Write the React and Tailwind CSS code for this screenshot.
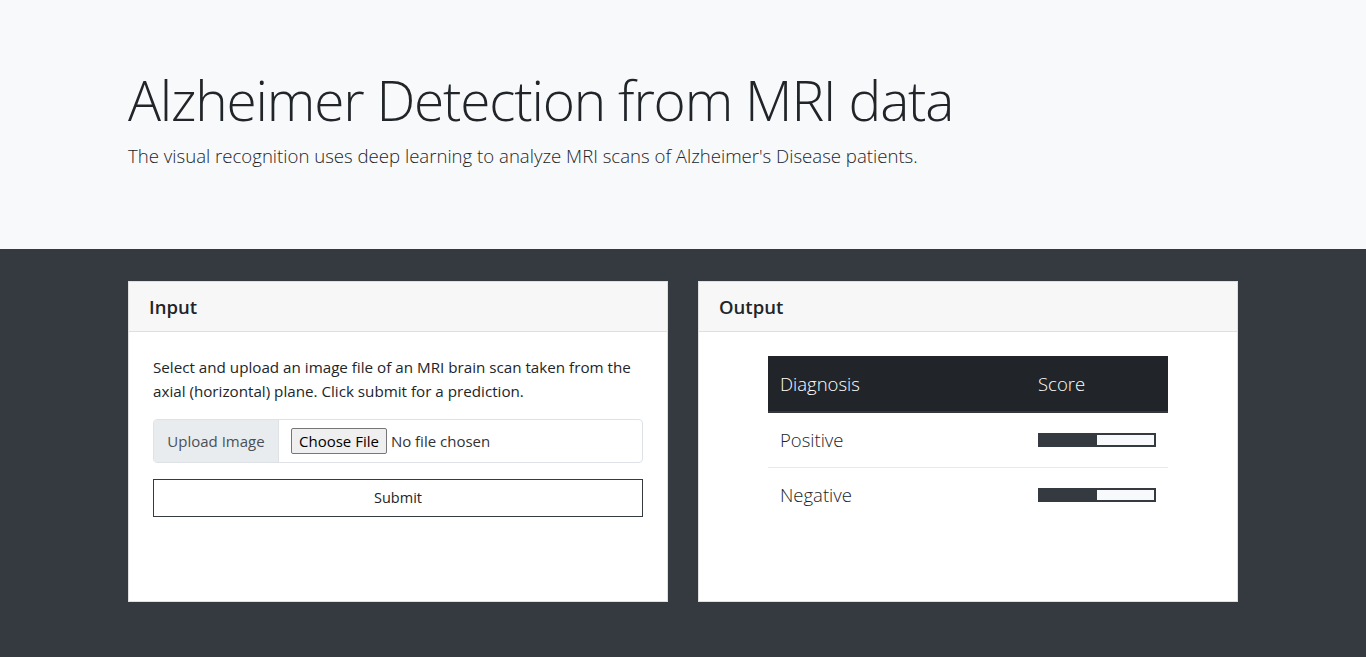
import React from 'react';

function ScoreBar({ value }) {
    return (
        <div className="h-[14px] w-[118px] border-2 border-[#343a40] bg-[#f8f9fa]">
            <div className="h-full bg-[#343a40]" style={{ width: `${value}%` }} />
        </div>
    );
}

export default function App() {
    const rows = [
        { label: 'Positive', score: 50 },
        { label: 'Negative', score: 50 },
    ];

    return (
        <div className="min-h-[657px] bg-[#343a40] font-['Open_Sans',sans-serif] text-[#212529]">
            {/* Jumbotron */}
            <div className="h-[249px] bg-[#f8f9fa]">
                <div className="mx-auto w-[1140px] px-[15px] pt-[67px]">
                    <h1 className="text-[55px] font-light leading-[1.2] tracking-[-1.2px] text-[#212529]">
                        Alzheimer Detection from MRI data
                    </h1>
                    <p className="mt-[9px] text-[18.6px] font-light leading-[1.5] text-[#212529]">
                        The visual recognition uses deep learning to analyze MRI scans of Alzheimer's Disease patients.
                    </p>
                </div>
            </div>

            {/* Cards */}
            <div className="mx-auto grid w-[1140px] grid-cols-2 gap-[30px] px-[15px] pt-[32px]">
                <div className="flex h-[321px] flex-col border border-[#dfdfdf] bg-white">
                    <div className="flex h-[50px] items-center border-b border-[#dfdfdf] bg-[#f7f7f7] px-[20px]">
                        <h5 className="text-[18.5px] font-semibold text-[#212529]">Input</h5>
                    </div>
                    <div className="px-[24px] pt-[23px]">
                        <p className="text-[15.2px] leading-[24px] text-[#212529]">
                            Select and upload an image file of an MRI brain scan taken from the axial (horizontal) plane. Click submit for a prediction.
                        </p>
                        <div className="mt-[16px] flex h-[44px] rounded-[4px] border border-[#dee2e6]">
                            <div className="flex w-[125px] items-center justify-center border-r border-[#dee2e6] bg-[#e9ecef] text-[15px] text-[#495057]">
                                Upload Image
                            </div>
                            <div className="flex items-center pl-[12px] text-[15px] text-[#495057]">
                                <span className="rounded-[2px] border border-[#767676] bg-[#efefef] px-[7px] py-[2px] text-[15px] leading-[20px] text-black">
                                    Choose File
                                </span>
                                <span className="ml-[4px] text-[#333]">No file chosen</span>
                            </div>
                        </div>
                        <button className="mt-[16px] flex h-[38px] w-full items-center justify-center border border-[#343a40] bg-white text-[14.5px] text-[#212529]">
                            Submit
                        </button>
                    </div>
                </div>

                <div className="flex h-[321px] flex-col border border-[#dfdfdf] bg-white">
                    <div className="flex h-[50px] items-center border-b border-[#dfdfdf] bg-[#f7f7f7] px-[20px]">
                        <h5 className="text-[18.5px] font-semibold text-[#212529]">Output</h5>
                    </div>
                    <div className="flex justify-center pt-[24px]">
                        <table className="w-[400px] table-fixed border-collapse">
                            <thead>
                                <tr className="h-[56px] border-b-2 border-[#32383e] bg-[#212529] text-left text-[18.5px] font-light text-white">
                                    <th className="w-[270px] pl-[12px] font-light">Diagnosis</th>
                                    <th className="font-light">Score</th>
                                </tr>
                            </thead>
                            <tbody>
                                {rows.map((r, i) => (
                                    <tr key={r.label} className={`h-[55px] ${i === 0 ? 'border-b border-[#e9e9e9]' : ''}`}>
                                        <td className="pl-[12px] text-[18.5px] font-light text-[#212529]">{r.label}</td>
                                        <td>
                                            <ScoreBar value={r.score} />
                                        </td>
                                    </tr>
                                ))}
                            </tbody>
                        </table>
                    </div>
                </div>
            </div>
        </div>
    );
}
